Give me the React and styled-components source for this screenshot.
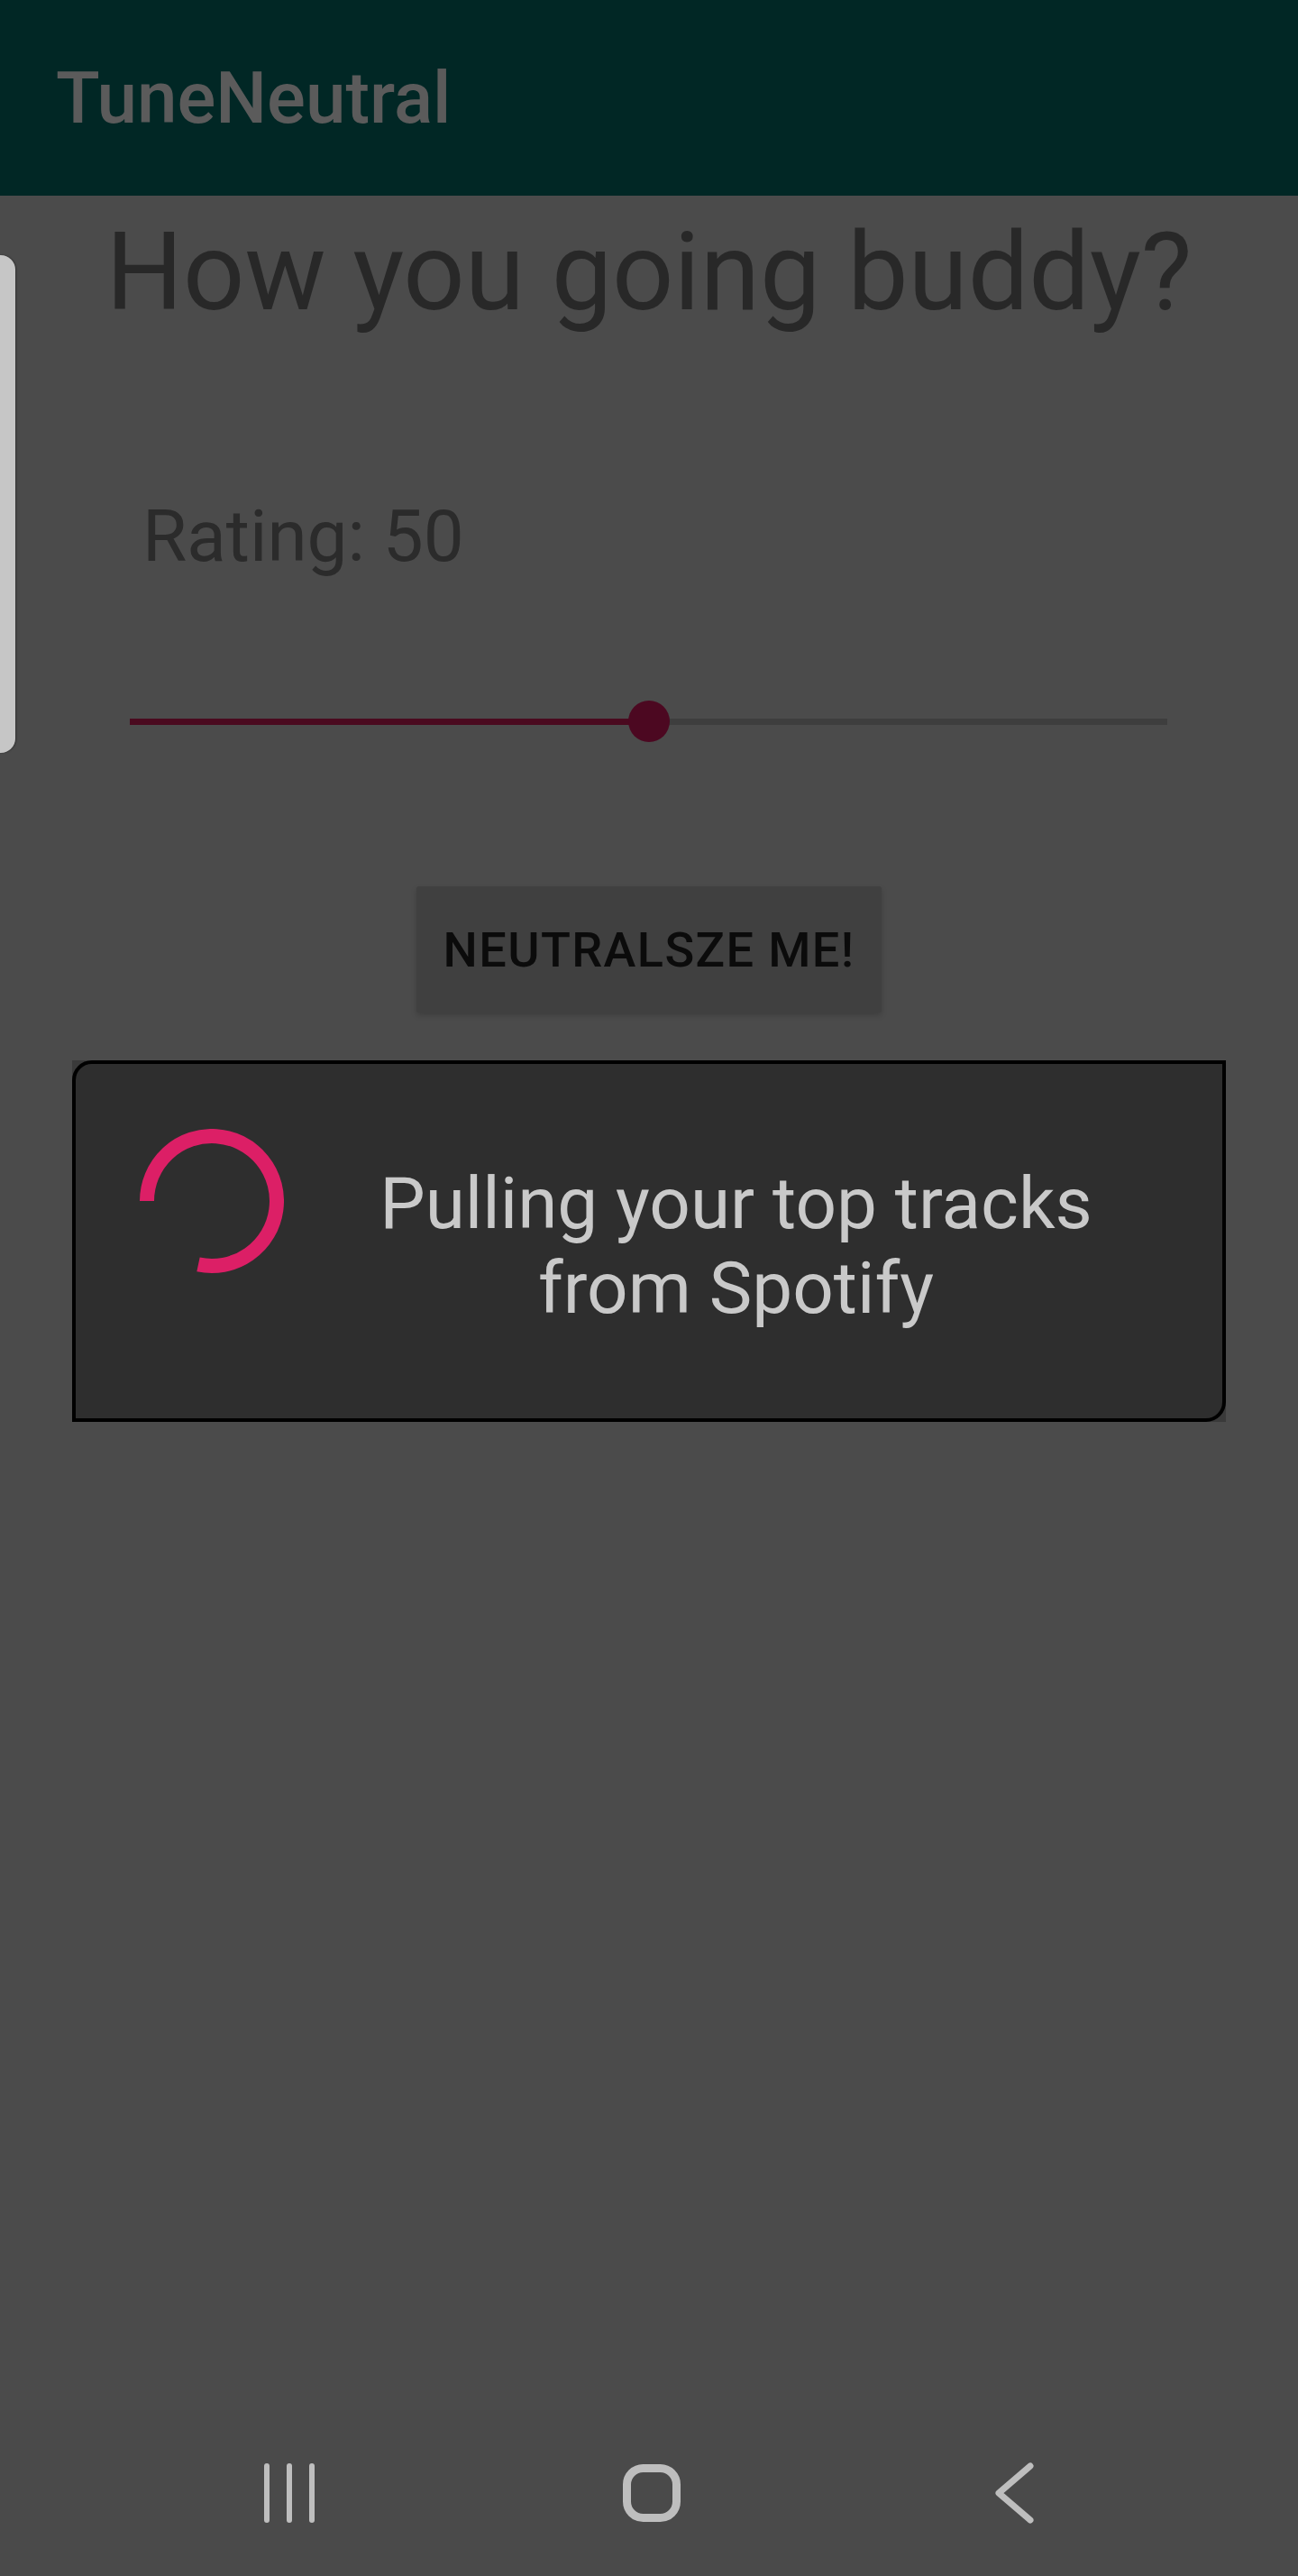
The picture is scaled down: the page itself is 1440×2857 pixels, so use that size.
import React from 'react';
import styled, { createGlobalStyle } from 'styled-components';

const GlobalStyle = createGlobalStyle`
  html, body {
    margin: 0;
    padding: 0;
    background: #4b4b4b;
  }
  body {
    font-family: Roboto, "Noto Sans", Arial, sans-serif;
  }
`;

// Styled components
const Screen = styled.div`
  position: relative;
  width: 1440px;
  min-height: 2857px;
  display: flex;
  flex-direction: column;
  background: #4b4b4b;
  overflow: hidden;
`;

const AppBar = styled.header`
  height: 217px;
  display: flex;
  align-items: center;
  padding-left: 62px;
  background: #012725;
`;

const AppTitle = styled.h1`
  margin: 0;
  font-size: 80px;
  line-height: 94px;
  font-weight: 500;
  color: #5b5b5b;
`;

const Main = styled.main`
  flex: 1;
  display: flex;
  flex-direction: column;
`;

const Heading = styled.h2`
  margin: 15px 0 0;
  font-size: 120px;
  line-height: 140px;
  font-weight: 400;
  text-align: center;
  color: #282828;
`;

const RatingLabel = styled.p`
  margin: 176px 0 0 158px;
  font-size: 80px;
  line-height: 94px;
  color: #2b2b2b;
`;

const SliderRow = styled.div`
  position: relative;
  margin: 135px 0 0 144px;
  width: 1151px;
  height: 46px;
  display: flex;
  align-items: center;
`;

const Track = styled.div`
  width: 100%;
  height: 7px;
  background: #3e3e3e;
  display: flex;
`;

const TrackFill = styled.div`
  height: 100%;
  background: #4a0a1f;
`;

const Thumb = styled.div`
  position: absolute;
  top: 0;
  width: 46px;
  height: 46px;
  margin-left: -23px;
  border-radius: 50%;
  background: #4c0821;
`;

const ButtonRow = styled.div`
  display: flex;
  justify-content: center;
  margin-top: 160px;
`;

const ActionButton = styled.button`
  width: 516px;
  height: 140px;
  border: none;
  border-radius: 3px;
  background: #404040;
  box-shadow: 0 3px 6px rgba(0, 0, 0, 0.18);
  font-family: Roboto, Arial, sans-serif;
  font-size: 54px;
  font-weight: 500;
  letter-spacing: 1.4px;
  color: #0b0b0b;
`;

const CardFrame = styled.section`
  margin: 53px 80px 0;
  height: 401px;
  background: #3a3a3a;
`;

const Card = styled.div`
  box-sizing: border-box;
  height: 100%;
  display: flex;
  align-items: center;
  border: 4px solid #000;
  border-radius: 22px 0 22px 0;
  background: #2e2e2e;
`;

const Spinner = styled.svg`
  align-self: flex-start;
  flex: none;
  margin: 72px 0 0 71px;
  width: 160px;
  height: 160px;
`;

const LoadingText = styled.p`
  flex: 1;
  margin: 10px 0 0;
  padding-right: 38px;
  font-size: 80px;
  line-height: 94px;
  text-align: center;
  color: #c9c9c9;
`;

const NavBar = styled.nav`
  height: 184px;
  display: flex;
  align-items: center;
  gap: 322px;
  padding-left: 281px;
  background: #4a4a4a;
`;

const NavIcon = styled.svg`
  width: 80px;
  height: 80px;
  stroke: #bebebe;
  fill: none;
  stroke-linecap: round;
  stroke-linejoin: round;
`;

const EdgeHandle = styled.div`
  position: absolute;
  left: 0;
  top: 283px;
  width: 17px;
  height: 552px;
  background: #c6c6c6;
  border-radius: 0 16px 16px 0;
  box-shadow: 1px 0 2px rgba(0, 0, 0, 0.35);
`;

function Slider({ value }) {
  return (
    <SliderRow>
      <Track>
        <TrackFill style={{ width: `${value}%` }} />
      </Track>
      <Thumb style={{ left: `${value}%` }} />
    </SliderRow>
  );
}

function App() {
  const rating = 50;
  return (
    <>
      <GlobalStyle />
      <Screen>
        <AppBar>
          <AppTitle>TuneNeutral</AppTitle>
        </AppBar>
        <Main>
          <Heading>How you going buddy?</Heading>
          <RatingLabel>Rating: {rating}</RatingLabel>
          <Slider value={rating} />
          <ButtonRow>
            <ActionButton>NEUTRALSZE ME!</ActionButton>
          </ButtonRow>
          <CardFrame>
            <Card>
              <Spinner viewBox="0 0 160 160">
                <path
                  d="M 8 80 A 72 72 0 1 1 65 150.4"
                  fill="none"
                  stroke="#dc1f66"
                  strokeWidth="16"
                />
              </Spinner>
              <LoadingText>
                Pulling your top tracks
                <br />
                from Spotify
              </LoadingText>
            </Card>
          </CardFrame>
        </Main>
        <NavBar>
          <NavIcon viewBox="0 0 80 80" strokeWidth="6">
            <line x1="15" y1="10" x2="15" y2="70" />
            <line x1="40" y1="10" x2="40" y2="70" />
            <line x1="65" y1="10" x2="65" y2="70" />
          </NavIcon>
          <NavIcon viewBox="0 0 80 80" strokeWidth="9">
            <rect x="12.5" y="12.5" width="55" height="55" rx="18" />
          </NavIcon>
          <NavIcon viewBox="0 0 80 80" strokeWidth="7">
            <polyline points="58,10 23,40 58,70" />
          </NavIcon>
        </NavBar>
        <EdgeHandle />
      </Screen>
    </>
  );
}

export default App;
